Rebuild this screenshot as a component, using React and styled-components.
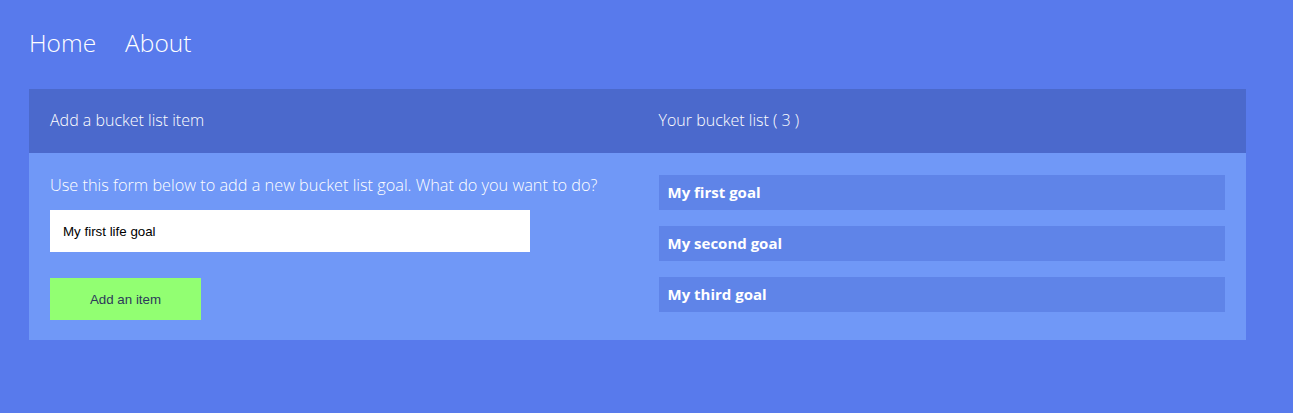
import React from 'react';
import styled, { createGlobalStyle } from 'styled-components';

const GlobalStyle = createGlobalStyle`
  body {
    margin: 0;
    background: #587aec;
    font-family: "Open Sans", "Liberation Sans", sans-serif;
    color: #fff;
  }
`;

const Page = styled.div`
  padding: 22px 47px 40px 29px;
`;

const Nav = styled.nav`
  display: flex;
  gap: 29px;
  height: 40px;
  align-items: center;
  margin-bottom: 27px;
`;

const NavLink = styled.a`
  font-size: 24.5px;
  font-weight: 300;
  color: #fff;
  text-decoration: none;
`;

const Card = styled.div`
  display: grid;
  grid-template-columns: 1fr 1fr;
`;

const Header = styled.div`
  background: #4b69cc;
  height: 64px;
  display: flex;
  align-items: center;
  padding: 0 21px 2px;
  box-sizing: border-box;
  font-size: 16px;
  font-weight: 300;
`;

const Body = styled.div`
  background: #7098f7;
  padding: ${p => (p.list ? '22px 21px 28px' : '21px 21px 20px')};
`;

const Intro = styled.p`
  margin: 0 0 14px;
  font-size: 16.3px;
  font-weight: 300;
  line-height: 22px;
`;

const Input = styled.input`
  display: block;
  box-sizing: border-box;
  width: 480px;
  height: 42px;
  border: none;
  padding: 0 13px;
  font-family: "Liberation Sans", Arial, sans-serif;
  font-size: 13.33px;
  color: #000;
  margin-bottom: 26px;
  outline: none;
`;

const Button = styled.button`
  width: 151px;
  height: 42px;
  border: none;
  background: #92ff72;
  font-family: "Liberation Sans", Arial, sans-serif;
  font-size: 13.33px;
  color: #2d3a5a;
  cursor: pointer;
`;

const List = styled.ul`
  list-style: none;
  margin: 0;
  padding: 0;
  display: flex;
  flex-direction: column;
  gap: 16px;
`;

const Item = styled.li`
  background: #5f84e8;
  height: 35px;
  display: flex;
  align-items: center;
  padding: 0 9px 1px;
  box-sizing: border-box;
  font-size: 15px;
  font-weight: 700;
`;

const goals = ['My first goal', 'My second goal', 'My third goal'];

export default function App() {
  return (
    <>
      <GlobalStyle />
      <Page>
        <Nav>
          <NavLink href="#">Home</NavLink>
          <NavLink href="#">About</NavLink>
        </Nav>
        <Card>
          <Header>Add a bucket list item</Header>
          <Header>Your bucket list ( {goals.length} )</Header>
          <Body>
            <Intro>Use this form below to add a new bucket list goal. What do you want to do?</Intro>
            <Input defaultValue="My first life goal" />
            <Button>Add an item</Button>
          </Body>
          <Body list>
            <List>
              {goals.map(g => (
                <Item key={g}>{g}</Item>
              ))}
            </List>
          </Body>
        </Card>
      </Page>
    </>
  );
}
